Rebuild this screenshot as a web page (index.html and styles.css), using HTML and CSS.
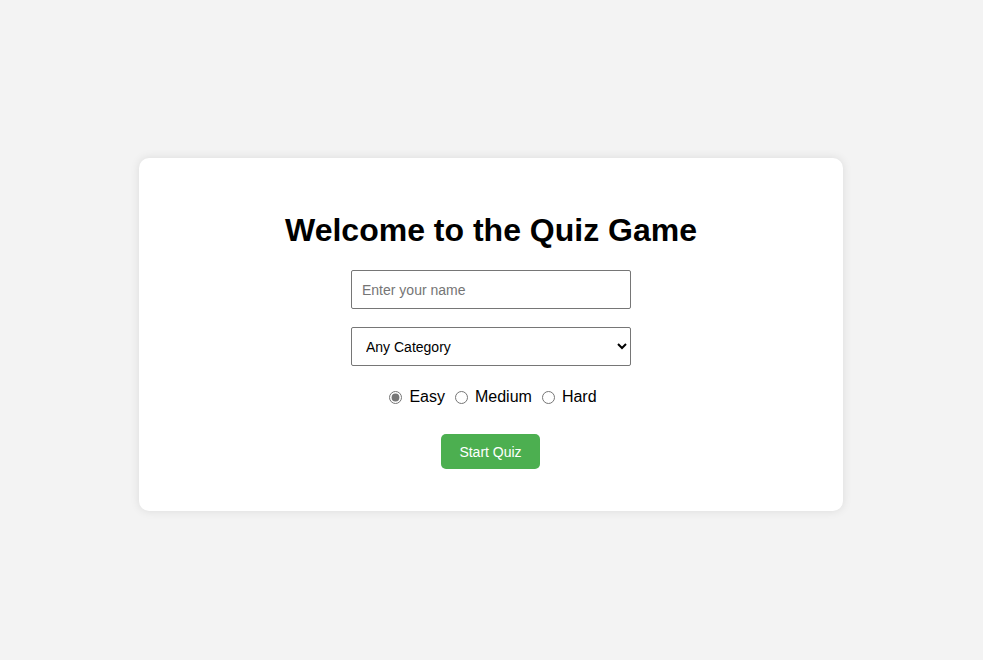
FILE: index.html
```html
<!DOCTYPE html>
<html lang="en">
<head>
<meta charset="UTF-8">
<title>Quiz Game</title>
<link rel="stylesheet" href="styles.css">
</head>
<body>
<div class="card">
  <h1 class="title">Welcome to the Quiz Game</h1>
  <input class="field" type="text" placeholder="Enter your name">
  <select class="field select">
    <option>Any Category</option>
  </select>
  <div class="levels">
    <label class="level"><input type="radio" name="lvl" checked> Easy</label>
    <label class="level"><input type="radio" name="lvl"> Medium</label>
    <label class="level"><input type="radio" name="lvl"> Hard</label>
  </div>
  <button class="start">Start Quiz</button>
</div>
</body>
</html>
```
FILE: styles.css
```css
html, body {
  margin: 0;
  height: 100%;
}
body {
  background: #f3f3f3;
  font-family: "Liberation Sans", Arial, sans-serif;
  display: flex;
  justify-content: center;
  align-items: center;
}
.card {
  box-sizing: border-box;
  width: 704px;
  margin: 9px 1px 0 0;
  background: #fff;
  border-radius: 10px;
  box-shadow: 0 0 10px rgba(0, 0, 0, 0.1);
  padding: 54px 0 42px;
  display: flex;
  flex-direction: column;
  align-items: center;
}
.title {
  margin: 0 0 21px;
  font-size: 32px;
  line-height: 37px;
  font-weight: bold;
  color: #000;
}
.field {
  box-sizing: border-box;
  width: 280px;
  height: 39px;
  margin: 0 0 18px;
  padding: 0 10px;
  border: 1px solid #767676;
  border-radius: 2px;
  font-family: "Liberation Sans", Arial, sans-serif;
  font-size: 14px;
  background: #fff;
  color: #000;
}
.field::placeholder {
  color: #757575;
}
.select {
  padding: 0 10px;
  margin-bottom: 21px;
}
.levels {
  display: flex;
  align-items: center;
  height: 20px;
  font-size: 16px;
  color: #000;
}
.level {
  display: flex;
  align-items: center;
  gap: 4px;
  margin-right: 6px;
}
.level:last-child {
  margin-right: 0;
}
.level input {
  margin: 0 3px 0 4px;
  width: 13px;
  height: 13px;
  accent-color: #767676;
}
.start {
  margin: 27px 1px 0 0;
  width: 99px;
  height: 35px;
  border: none;
  border-radius: 5px;
  background: #4caf50;
  color: #fff;
  font-family: "Liberation Sans", Arial, sans-serif;
  font-size: 14px;
  padding: 0;
}
```
